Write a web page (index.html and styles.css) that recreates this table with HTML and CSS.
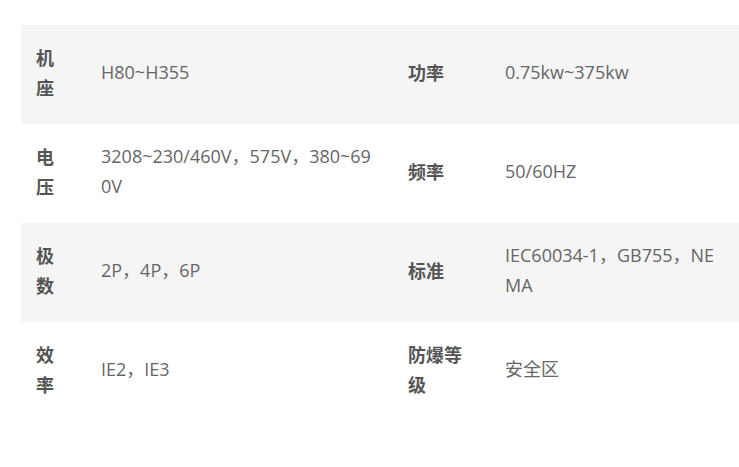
FILE: index.html
```html
<!DOCTYPE html>
<html lang="zh-CN">
<head>
<meta charset="utf-8">
<title>参数</title>
<link rel="stylesheet" href="styles.css">
</head>
<body>
<div class="wrap">
  <table class="spec">
    <colgroup>
      <col class="c-l1">
      <col class="c-v1">
      <col class="c-l2">
      <col class="c-v2">
    </colgroup>
    <tbody>
      <tr class="odd">
        <th>机座</th><td>H80~H355</td>
        <th>功率</th><td>0.75kw~375kw</td>
      </tr>
      <tr>
        <th>电压</th><td>3208~230/460V，575V，380~690V</td>
        <th>频率</th><td>50/60HZ</td>
      </tr>
      <tr class="odd">
        <th>极数</th><td>2P，4P，6P</td>
        <th>标准</th><td>IEC60034-1，GB755，NEMA</td>
      </tr>
      <tr>
        <th>效率</th><td>IE2，IE3</td>
        <th>防爆等级</th><td>安全区</td>
      </tr>
    </tbody>
  </table>
</div>
</body>
</html>
```
FILE: styles.css
```css
html, body {
  margin: 0;
  padding: 0;
  background: #fff;
}
.wrap {
  padding: 25px 0 0 21px;
}
.spec {
  width: 718px;
  table-layout: fixed;
  border-collapse: collapse;
  font-family: "Open Sans", "Noto Sans CJK SC", sans-serif;
  font-size: 18px;
  line-height: 30px;
}
.c-l1 { width: 65px; }
.c-v1 { width: 307px; }
.c-l2 { width: 97px; }
.c-v2 { width: 249px; }
.spec tr {
  height: 99px;
}
.spec tr.odd {
  background: #f5f5f5;
}
.spec th,
.spec td {
  padding: 0 15px 6px;
  vertical-align: middle;
  text-align: left;
  word-break: break-all;
}
.spec th {
  font-family: "Noto Sans CJK SC", sans-serif;
  font-weight: bold;
  color: #555;
}
.spec td {
  font-weight: normal;
  color: #666;
}
```
